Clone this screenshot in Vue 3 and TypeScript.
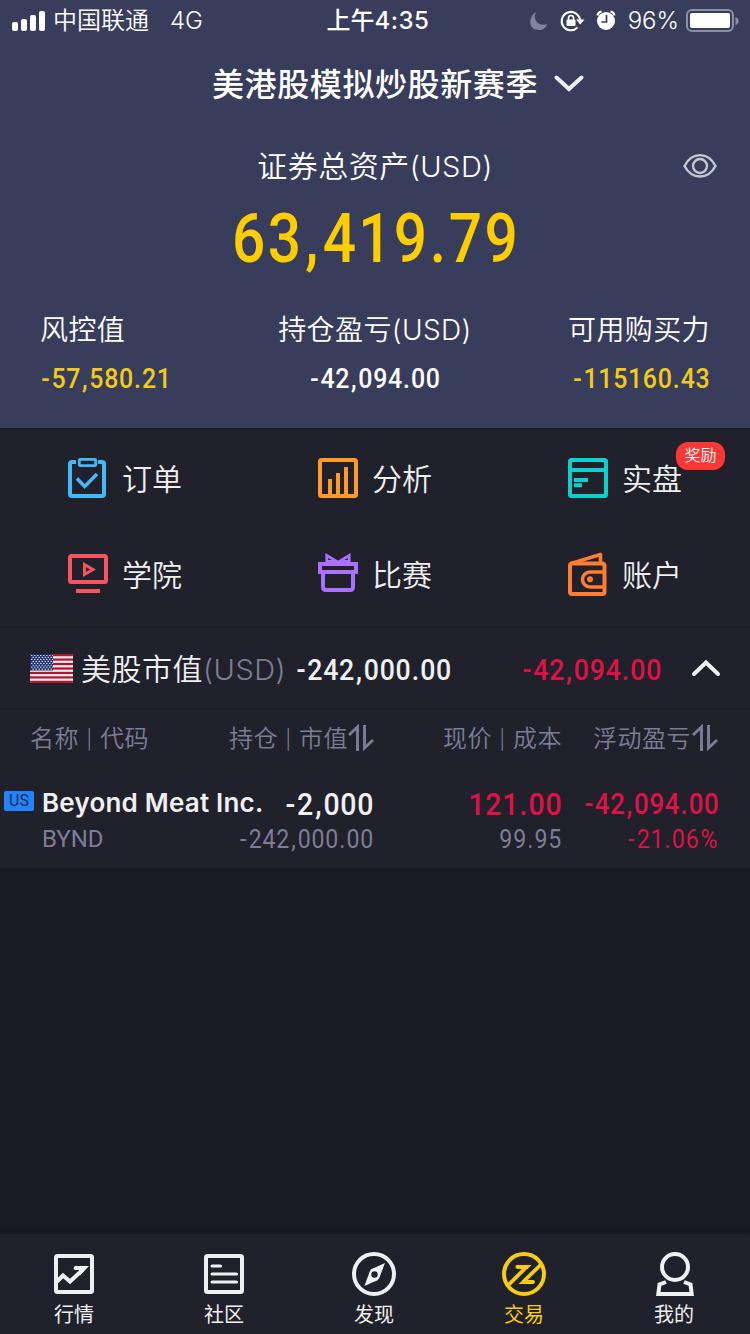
<script setup lang="ts">
import { h } from 'vue'

// Condensed tabular figures: every character sits centred in its own cell.
const cell: Record<string, number> = { '-': 0.75, ',': 0.55, '.': 0.55, '%': 1.45 }

const Figure = (props: { value: string; size: number }) => {
  const large = props.size > 60
  const unit = props.size * (large ? 0.515 : 0.53)
  const squeeze = large ? 0.85 : 0.89
  const xs: number[] = []
  let pos = 0
  for (const ch of props.value) {
    const w = (cell[ch] ?? 1) * unit
    xs.push((pos + w / 2) / squeeze)
    pos += w
  }
  const height = Math.round(props.size * 0.711)
  return h('svg', { width: pos, height, style: { overflow: 'visible', flex: 'none', display: 'block' } }, [
    h(
      'text',
      {
        x: xs.map((x) => x.toFixed(2)).join(' '),
        y: height,
        'text-anchor': 'middle',
        'font-size': props.size,
        fill: 'currentColor',
        transform: `scale(${squeeze} 1)`,
      },
      props.value,
    ),
  ])
}
Figure.props = ['value', 'size']

const entries = [
  { id: 'orders', label: '订单', color: '#43b9f7' },
  { id: 'analysis', label: '分析', color: '#ff9a2a' },
  { id: 'live', label: '实盘', color: '#0ccfce', badge: '奖励' },
  { id: 'academy', label: '学院', color: '#fb5260' },
  { id: 'contest', label: '比赛', color: '#aa70ff' },
  { id: 'account', label: '账户', color: '#ff7d32' },
]

const tabs = [
  { id: 'quotes', label: '行情' },
  { id: 'community', label: '社区' },
  { id: 'discover', label: '发现' },
  { id: 'trade', label: '交易', active: true },
  { id: 'me', label: '我的' },
]
const starRows = [0, 1, 2, 3, 4, 5, 6, 7]
</script>

<template>
  <div class="page">
    <header class="hero">
      <div class="status">
        <div class="st-left">
          <svg width="34" height="20" viewBox="0 0 34 20" fill="#fff">
            <rect x="0" y="11" width="6" height="9" rx="2" />
            <rect x="9" y="8" width="6" height="12" rx="2" />
            <rect x="18" y="4" width="6" height="16" rx="2" />
            <rect x="27" y="0" width="6" height="20" rx="2" />
          </svg>
          <span class="carrier">中国联通</span><span class="net">4G</span>
        </div>
        <div class="clock">上午<span>4:35</span></div>
        <div class="st-right">
          <svg width="88" height="24" viewBox="0 0 88 24">
            <path d="M8 3C0 8 0 21 11 21c4 0 7-2 8-6C11 18 4 11 8 3Z" fill="#80849c" />
            <path d="M49.500 18.500A9.200 9.200 0 1 1 52 11" fill="none" stroke="#fff" stroke-width="2" />
            <path d="M48 10.500h8.500L52.200 15.500z" fill="#fff" />
            <rect x="38.500" y="10.500" width="9" height="6.500" rx="1" fill="#fff" />
            <path d="M40.500 11V9a2.500 2.500 0 0 1 5 0v2" fill="none" stroke="#fff" stroke-width="1.600" />
            <circle cx="78" cy="12" r="9" fill="#fff" />
            <path d="M69.500 6.500a5 5 0 0 1 4-4M86.500 6.500a5 5 0 0 0-4-4" fill="none" stroke="#fff" stroke-width="2.200" />
            <path d="M78.500 6v7h-5" fill="none" stroke="#383d5c" stroke-width="1.700" />
          </svg>
          <span class="pct">96%</span>
          <svg width="53" height="24" viewBox="0 0 53 24">
            <rect x="1" y="1" width="46" height="21" rx="5" fill="none" stroke="#8b8ea5" stroke-width="2" />
            <rect x="4" y="4" width="40" height="15" rx="2" fill="#fff" />
            <path d="M49.500 8q3 1 3 4t-3 4z" fill="#8b8ea5" />
          </svg>
        </div>
      </div>

      <div class="title">
        <span>美港股模拟炒股新赛季</span>
        <svg width="30" height="20" viewBox="0 0 30 20"><path d="M2.500 3.500 15 15 27.500 3.500" fill="none" stroke="#f0f0f4" stroke-width="4" stroke-linecap="round" /></svg>
      </div>

      <div class="assets">
        <div class="assets-label">证券总资产<span>(USD)</span></div>
        <svg class="eye" width="34" height="26" viewBox="0 0 34 26" fill="none" stroke="#c7c8d1" stroke-width="2.400">
          <path d="M1.500 13C9-1.500 25-1.500 32.500 13 25 27 9 27 1.500 13Z" /><circle cx="17" cy="13" r="7" />
        </svg>
      </div>
      <div class="total"><Figure value="63,419.79" :size="69" /></div>

      <div class="stats">
        <div class="stat left">
          <div class="stat-label">风控值</div>
          <Figure class="yellow" value="-57,580.21" :size="28" />
        </div>
        <div class="stat mid">
          <div class="stat-label">持仓盈亏<span>(USD)</span></div>
          <Figure value="-42,094.00" :size="28" />
        </div>
        <div class="stat right">
          <div class="stat-label">可用购买力</div>
          <Figure class="yellow" value="-115160.43" :size="28" />
        </div>
      </div>
    </header>

    <nav class="entries">
      <div v-for="e in entries" :key="e.id" class="entry">
        <svg width="44" height="46" viewBox="0 0 44 46" fill="none" :stroke="e.color" stroke-width="4">
          <template v-if="e.id === 'orders'">
            <path d="M10 6H6q-2 0-2 2v30q0 2 2 2h30q2 0 2-2V8q0-2-2-2h-4" />
            <rect x="13.300" y="3.300" width="16.400" height="6.400" rx="1" stroke-width="2.800" />
            <path d="M11 22.500 18.700 30.500 31 18" stroke-width="3.600" />
          </template>
          <template v-else-if="e.id === 'analysis'">
            <rect x="4" y="4" width="36" height="36" rx="1.500" />
            <path d="M14 40V23M22 40V17M30 40V11" />
          </template>
          <template v-else-if="e.id === 'live'">
            <rect x="4" y="4" width="36" height="36" rx="1.500" />
            <path d="M4 14h36M8 24h14M8 29.200h8" />
          </template>
          <template v-else-if="e.id === 'academy'">
            <rect x="4" y="4" width="36" height="26" rx="1.500" />
            <path d="M18.500 12.500v10l8.500-5z" stroke-width="3" />
            <path d="M10 39h24" />
          </template>
          <template v-else-if="e.id === 'contest'">
            <path d="M4 12h36v8H4z" />
            <path d="M7 20v15q0 3 3 3h24q3 0 3-3V20" />
            <path d="M10.800 11V3.500L22 10.200 33.200 3.500V11" stroke-width="2.800" />
            <path d="M10 9.500h10M24 9.500h10" stroke-width="3" />
          </template>
          <template v-else>
            <path d="M6 11.500h30q2.500 0 2.500 2.500v26q0 2-2 2H6q-2 0-2-2V13.500q0-2 2-2Z" />
            <path d="M5 11.500 34.500 2.500V11" stroke-width="3.600" stroke-linejoin="round" />
            <path d="M38 20H24a7.500 7.500 0 0 0 0 15h14" stroke-width="3.600" />
            <circle cx="24" cy="27.300" r="3" :fill="e.color" stroke="none" />
          </template>
        </svg>
        <span>{{ e.label }}</span>
        <em v-if="e.badge" class="badge">{{ e.badge }}</em>
      </div>
    </nav>

    <section class="market">
      <svg width="43" height="29" viewBox="0 0 43 29">
        <defs><clipPath id="flag"><rect width="43" height="29" rx="1.500" /></clipPath></defs>
        <g clip-path="url(#flag)">
          <rect width="43" height="29" fill="#f4eef0" />
          <rect v-for="n in 7" :key="n" x="0" :y="(n - 1) * 4.460" width="43" height="2.230" fill="#b3142f" />
          <rect width="23" height="16.500" fill="#1c2d69" />
          <path v-for="r in starRows" :key="r" :d="`M${r % 2 ? 2.500 : 1} ${1.500 + r * 1.950}H23`" stroke="#cbd2e8" stroke-width="1.200" stroke-dasharray="1.500 1.500" />
        </g>
      </svg>
      <div class="market-name">美股市值<span>(USD)</span></div>
      <Figure class="market-value" value="-242,000.00" :size="30" />
      <Figure class="red market-pl" value="-42,094.00" :size="30" />
      <svg class="up" width="30" height="20" viewBox="0 0 30 20"><path d="M3 16 15 4.500 27 16" fill="none" stroke="#f0f0f2" stroke-width="4" stroke-linecap="round" /></svg>
    </section>

    <section class="holdings">
      <div class="row head">
        <div>名称 <s>|</s> 代码</div>
        <div class="end"><span>持仓 <s>|</s> 市值</span><svg width="26" height="28" viewBox="0 0 26 28"><path d="M1 11 9.500 3V27M16.500 1V24L25 16" fill="none" stroke="#7d7d98" stroke-width="2.900" /></svg></div>
        <div class="end"><span>现价 <s>|</s> 成本</span></div>
        <div class="end last">浮动盈亏<svg width="26" height="28" viewBox="0 0 26 28"><path d="M1 11 9.500 3V27M16.500 1V24L25 16" fill="none" stroke="#7d7d98" stroke-width="2.900" /></svg></div>
      </div>
      <div class="row stock">
        <div class="name"><i>US</i><b>Beyond Meat Inc.</b></div>
        <div class="end"><Figure value="-2,000" :size="32" /></div>
        <div class="end red"><Figure value="121.00" :size="32" /></div>
        <div class="end red"><Figure value="-42,094.00" :size="29" /></div>
      </div>
      <div class="row sub">
        <div class="code">BYND</div>
        <div class="end"><Figure value="-242,000.00" :size="26" /></div>
        <div class="end"><Figure value="99.95" :size="26" /></div>
        <div class="end red"><Figure value="-21.06%" :size="26" /></div>
      </div>
    </section>

    <footer class="tabs">
      <div v-for="t in tabs" :key="t.id" class="tab" :class="{ active: t.active }">
        <svg width="44" height="44" viewBox="0 0 44 44" fill="none" stroke="currentColor" stroke-width="4">
          <template v-if="t.id === 'quotes'">
            <rect x="4" y="4" width="36" height="36" rx="1.500" />
            <path d="M5 29.500 11 23.500 18 29.500 31 17.500" />
            <path d="M23 14h14L28 23.500 27 18h-4.500q-2-2 .500-4Z" fill="currentColor" stroke="none" />
          </template>
          <template v-else-if="t.id === 'community'">
            <rect x="4" y="4" width="36" height="36" rx="1.500" />
            <path d="M10 14h8.500M10 22h24.500M10 30h24.500" stroke-width="3" stroke-linecap="round" />
          </template>
          <template v-else-if="t.id === 'discover'">
            <circle cx="22" cy="22" r="20" />
            <path fill-rule="evenodd" d="M33 11 27.500 25.500Q26 29 22.500 29.500L12.500 34 17.500 20Q18.500 16.500 22 16ZM22.500 19.300a3.200 3.200 0 1 0 0 6.400 3.200 3.200 0 0 0 0-6.400Z" fill="currentColor" stroke="none" />
          </template>
          <template v-else-if="t.id === 'trade'">
            <circle cx="22" cy="22" r="20" />
            <path d="M6.500 33 24.500 15M21 30 39.500 12" stroke-width="3.800" />
            <path d="M14.500 13H29.500L25.500 17H15q-3-2-.500-4ZM31.500 32H16.500L21 28h10.500q3 2 0 4Z" fill="currentColor" stroke="none" />
          </template>
          <template v-else>
            <circle cx="23" cy="15" r="13" />
            <path d="M14 30 7.500 32.500 6.300 42h33.400L38.500 32.500 32 30" />
          </template>
        </svg>
        <span>{{ t.label }}</span>
      </div>
    </footer>
  </div>
</template>

<style>
body {
  background: #1b1b24;
}
</style>

<style scoped>
.page {
  width: 750px;
  height: 1334px;
  display: flex;
  flex-direction: column;
  overflow: hidden;
  background: #1b1b24;
  color: #fff;
  font-family: Inter, "Noto Sans CJK SC", sans-serif;
  font-weight: 350;
}
.page svg {
  flex: none;
  font-family: Roboto, sans-serif;
}
.hero {
  height: 428px;
  flex: none;
  background: #383d5c;
  border-bottom: 2px solid #1b1c28;
}
.status {
  height: 40px;
  padding: 1px 11px 0 12px;
  box-sizing: border-box;
  display: grid;
  grid-template-columns: 1fr auto 1fr;
  align-items: center;
  font-size: 24px;
  line-height: 40px;
}
.st-left,
.st-right {
  display: flex;
  align-items: center;
}
.st-right {
  justify-content: flex-end;
}
.carrier {
  margin-left: 7px;
}
.net {
  margin-left: 21px;
}
.clock {
  font-weight: 500;
  margin-left: 5px;
}
.clock span {
  letter-spacing: 0.5px;
}
.pct {
  margin: 0 7px 0 12px;
}
.title {
  height: 88px;
  padding-left: 46px;
  display: flex;
  align-items: center;
  justify-content: center;
  gap: 16px;
  font-size: 32px;
  font-weight: 500;
  letter-spacing: 0.6px;
}
.title span {
  margin-top: -4px;
}
.assets {
  height: 76px;
  display: grid;
  grid-template-columns: 1fr auto 1fr;
  align-items: center;
}
.assets-label {
  grid-column: 2;
  margin-top: -4px;
  font-size: 30px;
  letter-spacing: 0.5px;
}
.assets-label span {
  font-size: 29px;
}
.eye {
  justify-self: end;
  margin-right: 33px;
}
.total {
  height: 67px;
  margin-bottom: 3px;
  display: flex;
  align-items: center;
  justify-content: center;
  color: #fccd00;
  font-weight: 500;
}
.stats {
  margin: 39px 40px 0;
  display: grid;
  grid-template-columns: 1fr auto 1fr;
}
.stat {
  display: flex;
  flex-direction: column;
  gap: 17px;
  font-weight: 500;
}
.mid {
  align-items: center;
}
.right {
  align-items: flex-end;
}
.stat-label {
  height: 41px;
  line-height: 41px;
  font-size: 28px;
  font-weight: 350;
  letter-spacing: 0.4px;
}
.yellow {
  color: #f2cb18;
}
.red {
  color: #df1246;
}
.entries {
  height: 196px;
  flex: none;
  display: grid;
  grid-template-columns: repeat(3, 250px);
  grid-template-rows: 96px 100px;
  background: #21212b;
  border-bottom: 2px solid #1b1b24;
  color: #f0f0f2;
}
.entry {
  position: relative;
  display: flex;
  align-items: flex-start;
  padding: 26px 0 0 66px;
  gap: 12px;
  font-size: 30px;
  line-height: 46px;
}
.badge {
  position: absolute;
  left: 176px;
  top: 12px;
  width: 49px;
  height: 28px;
  border-radius: 12px;
  background: #fa3734;
  color: #fff;
  font-size: 16px;
  font-style: normal;
  line-height: 27px;
  text-align: center;
}
.market {
  height: 82px;
  flex: none;
  display: flex;
  align-items: center;
  padding: 0 29px 0 30px;
  box-sizing: border-box;
  background: #21212b;
  border-bottom: 2px solid #1b1b24;
  color: #f0f0f2;
  font-weight: 500;
}
.market-name {
  margin: -3px 0 0 8px;
  font-size: 30px;
  font-weight: 350;
  letter-spacing: 0.5px;
}
.market-name span {
  color: #7d7d98;
  font-size: 29px;
}
.market-value {
  margin: 2px 0 0 9px;
}
.market-pl {
  margin: 2px 0 0 auto;
}
.up {
  margin-left: 29px;
}
.holdings {
  height: 158px;
  flex: none;
  background: #21212b;
}
.row {
  display: grid;
  grid-template-columns: 143px 201px 188px 157px;
  margin-left: 30px;
  align-items: center;
}
.end {
  display: flex;
  justify-content: flex-end;
  align-items: center;
}
.head {
  height: 53px;
  padding-bottom: 4px;
  color: #7d7d98;
  font-size: 24px;
  letter-spacing: 0.5px;
}
.head svg {
  margin-top: 3px;
}
.last {
  padding-right: 1px;
}
.last svg {
  margin-left: 1px;
}
.head s {
  font-size: 19px;
  text-decoration: none;
  vertical-align: 1px;
}
.stock {
  height: 38px;
  margin-top: 17px;
  color: #f0f0f2;
  font-weight: 500;
}
.name {
  display: flex;
  align-items: center;
  margin: -2px 0 0 -26px;
  white-space: nowrap;
}
.name i {
  flex: none;
  width: 30px;
  height: 20px;
  margin: -2px 8px 0 0;
  border-radius: 2px;
  background: #2283fa;
  color: #172a57;
  font: 400 16px/20px Roboto, sans-serif;
  text-align: center;
}
.name b {
  font-size: 26px;
  font-weight: 600;
  letter-spacing: 0.2px;
}
.sub {
  height: 34px;
  color: #7d7d98;
  font-weight: 450;
}
.code {
  padding-left: 12px;
  font-family: Roboto, sans-serif;
  font-size: 24px;
}
.tabs {
  height: 100px;
  margin-top: auto;
  margin-left: -1px;
  flex: none;
  display: grid;
  grid-template-columns: repeat(5, 150px);
  background: #21212b;
  box-shadow: 0 -2px 8px rgba(0, 0, 0, 0.18);
}
.tab {
  display: flex;
  flex-direction: column;
  align-items: center;
  padding-top: 18px;
  color: #f0f0f2;
  font-size: 20px;
  font-weight: 400;
  line-height: 38px;
}
.active {
  color: #f8cc12;
}
</style>
